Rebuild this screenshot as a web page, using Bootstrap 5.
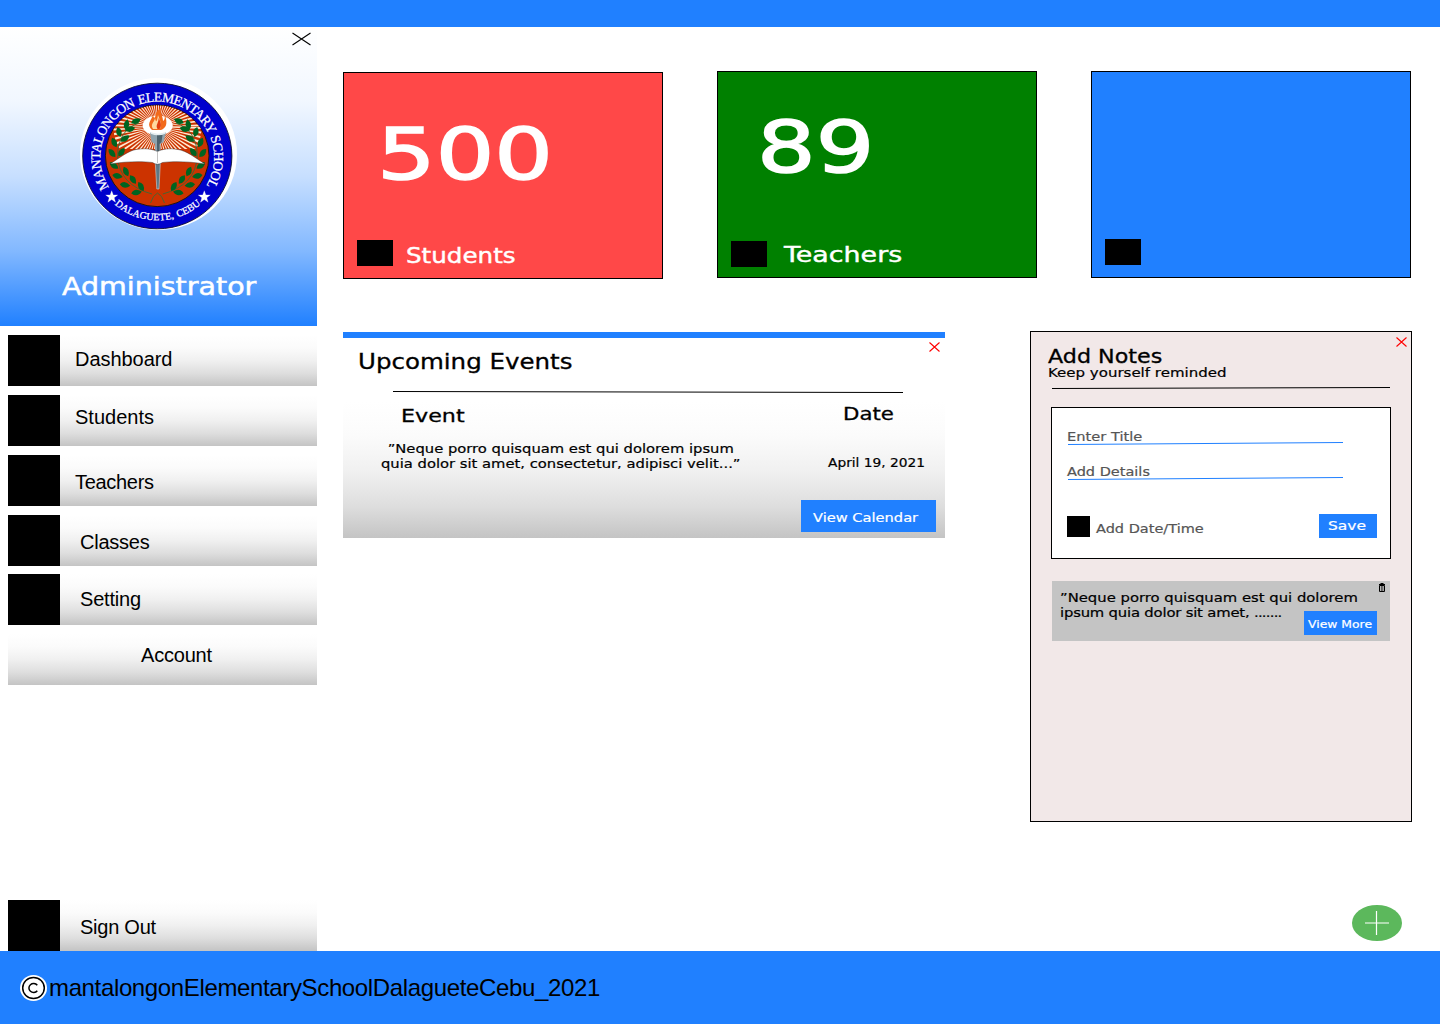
<!DOCTYPE html>
<html lang="en">
<head>
<meta charset="utf-8">
<meta name="viewport" content="width=device-width, initial-scale=1">
<title>Administrator Dashboard</title>
<link href="https://cdn.jsdelivr.net/npm/bootstrap@5.3.0/dist/css/bootstrap.min.css" rel="stylesheet">
<style>
  :root { --brand: #2080ff; }
  body { font-family: "Liberation Sans", Arial, sans-serif; color: #000; background: #fff; }
  .page { width: 1440px; height: 1024px; }
  .brand-bg { background: var(--brand); }
  .topbar { height: 27px; }
  .bottombar { height: 73px; padding: 0 0 0 20px; font-size: 24px; letter-spacing: -.36px; }
  svg { display: block; overflow: visible; flex: none; }

  /* wide display lettering */
  .wide { display: block; font-family: "DejaVu Sans", Verdana, sans-serif; line-height: 1; white-space: nowrap;
          transform: scaleX(var(--sx, 1.18)); transform-origin: 0 50%; -webkit-text-stroke: .3px currentColor; }
  .t-sm { font-size: 12.5px; -webkit-text-stroke-width: .2px; }

  /* sidebar */
  .sidebar { width: 317px; }
  .profile { height: 299px; padding-top: 6px;
    background: linear-gradient(#fff 0, #f1f7ff 25%, #c7dfff 50%, #82b8ff 75%, var(--brand) 100%); }
  .profile .close-x { margin-right: 6px; }
  .seal { margin: 31px 0 0 78px; }
  .role { margin: 43px 0 0 62px; font-size: 25px; --sx: 1.14; -webkit-text-stroke-width: .5px; }
  .menu { margin-left: 8px; padding-top: 9px; gap: 9px; }
  .fade-grey { background: linear-gradient(#fff 0, #fbfbfb 25%, #f0f0f0 50%, #dedede 75%, #c4c4c4 100%); }
  .entry { height: 51px; font-size: 20px; line-height: 1; color: #000; text-decoration: none; }
  .entry .blk { width: 52px; height: 51px; }
  .entry-out { margin-left: 8px; }
  .blk { background: #000; flex: none; }

  /* content */
  .main-area { padding: 44px 28px 0 26px; }
  .stats { gap: 54px; }
  .stat { width: 320px; height: 207px; border: 1px solid #000; padding: 0 0 12px 13px; }
  .stat-red { background: #ff4848; margin-top: 1px; padding-bottom: 12px; }
  .stat-green { background: #008000; padding-bottom: 10px; }
  .stat .blk { width: 36px; height: 26px; }
  .figure-num { font-size: 72px; --sx: 1.28; -webkit-text-stroke-width: 1.6px; }
  .stat-red .figure-num { margin: 45px 0 0 20px; }
  .stat-green .figure-num { margin: 39px 0 0 26px; }
  .stat-name { font-size: 20.5px; -webkit-text-stroke-width: .4px; }
  .panels { margin-top: 52px; }
  .events { width: 602px; height: 206px; border-top: 6px solid var(--brand); margin-top: 1px; padding: 4px 9px 6px 15px;
    background: linear-gradient(#fff 32%, #fbfbfb 49%, #f0f0f0 67%, #dedede 84%, #c4c4c4 100%); }
  .events h2 { font-size: 20.5px; margin: 10px 0 0 0; --sx: 1.195; }
  .events .head-row { font-size: 18.5px; margin: 14px 42px 0 43px; }
  .events .quote { line-height: 15px; text-align: center; margin: 0 0 0 23px; transform-origin: 0 0; }
  .btn-flat { background: var(--brand); color: #fff; border: 0; border-radius: 0; padding: 0; text-align: left;
    display: flex; align-items: flex-start; }
  .btn-flat:hover { background: #0d6efd; color: #fff; }
  .btn-cal { width: 135px; height: 32px; padding: 12px 0 0 12px; --sx: 1.17; }
  .notes { width: 382px; height: 491px; background: #f2e8e8; border: 1px solid #000; padding: 5px 20px 0 20px; }
  .notes h2 { font-size: 19px; margin: 10px 0 0 -3px; --sx: 1.17; }
  .note-form { height: 152px; background: #fff; border: 1px solid #000; padding: 23px 13px 0 15px; margin: 18px 0 0 0; color: #555; }
  .note-form .blk { width: 23px; height: 21px; margin-top: 2px; }
  .btn-save { width: 58px; height: 24px; padding: 6px 0 0 9px; --sx: 1.24; }
  .saved { height: 60px; background: #c4c4c4; margin: 22px 1px 0 1px; padding: 9px 0 0 8px; }
  .saved .txt { line-height: 15px; }
  .btn-more { width: 73px; height: 24px; right: 13px; bottom: 6px; font-size: 10.5px; }
  .btn-more .wide { margin: 8px 0 0 4px; --sx: 1.18; -webkit-text-stroke-width: .2px; }
  .bin { top: 2px; right: 5px; }
  .fab { right: 38px; bottom: 83px; }
</style>
</head>
<body>
<div class="page d-flex flex-column position-relative overflow-hidden">
  <header class="topbar brand-bg flex-shrink-0"></header>

  <div class="d-flex flex-grow-1">
    <aside class="sidebar d-flex flex-column flex-shrink-0">
      <div class="profile">
        <div class="d-flex justify-content-end">
          <svg class="close-x" width="19" height="13" stroke="#000" stroke-width="1.1"><path d="M.5 0 18.500 12M18.500 0 .5 12"/></svg>
        </div>
        <svg class="seal" width="160" height="154" viewBox="78 77 160 154">
          <defs>
            <path id="arcTop" d="M109.700 188.300A56.800 56 0 1 1 204.700 188.300"/>
            <path id="arcBot" d="M114.500 204.500A65 63.500 0 0 0 200.500 204.500"/>
            <clipPath id="disc"><ellipse cx="157.200" cy="155.800" rx="51.500" ry="50.500"/></clipPath>
            <clipPath id="upper"><path d="M100 100h115v49H100z"/></clipPath>
            <path id="leaf" d="M-5.300 0Q-1-5.600 5.300 0Q0 5.600-5.300 0z"/>
            <g id="laurel">
              <path d="M139 123Q118 130 117.500 156Q119 185 152 194" fill="none" stroke="#3a6a35" stroke-width=".9"/>
              <g fill="#006420">
                <use href="#leaf" transform="translate(126.500 124.500)rotate(-80)"/><use href="#leaf" transform="translate(136 121)rotate(-25)"/>
                <use href="#leaf" transform="translate(119 132)rotate(75)"/><use href="#leaf" transform="translate(130 129)rotate(-15)"/>
                <use href="#leaf" transform="translate(114.300 142.500)rotate(65)"/><use href="#leaf" transform="translate(125 138.500)rotate(-35)"/>
                <use href="#leaf" transform="translate(112 153)rotate(50)"/><use href="#leaf" transform="translate(121.500 152)rotate(-55)"/>
                <use href="#leaf" transform="translate(114 165.500)rotate(35)"/><use href="#leaf" transform="translate(126 171.500)rotate(65)"/>
                <use href="#leaf" transform="translate(117.500 176)rotate(12)"/><use href="#leaf" transform="translate(133 179.500)rotate(55)"/>
                <use href="#leaf" transform="translate(125 185)rotate(8)"/><use href="#leaf" transform="translate(141 186.500)rotate(60)"/>
                <use href="#leaf" transform="translate(136.500 192.500)rotate(-10)"/>
              </g>
            </g>
            <path id="star" d="M0-6.300 1.600-2.100 6-2 2.500.8 3.800 5.200 0 2.600-3.800 5.200-2.500.8-6-2-1.600-2.100z"/>
          </defs>
          <ellipse cx="158.500" cy="154" rx="78.500" ry="76" fill="#fff"/>
          <ellipse cx="157.300" cy="156" rx="74.600" ry="72.800" fill="#0000cd" stroke="#101030" stroke-width=".9"/>
          <ellipse cx="157.200" cy="155.800" rx="51.800" ry="50.800" fill="#cc3300" stroke="#111" stroke-width=".9"/>
          <g clip-path="url(#disc)"><g clip-path="url(#upper)">
            <circle cx="157.500" cy="127" r="22" fill="none" stroke="#ffe9d0" stroke-width="44" stroke-dasharray="1.05 1.253"/>
          </g></g>
          <use href="#laurel"/>
          <use href="#laurel" transform="translate(314.800 0)scale(-1 1)"/>
          <path d="M150.500 203Q153 195 157.500 193Q162 195 164.500 203" fill="none" stroke="#3a6a35" stroke-width=".9"/>
          <ellipse cx="157.700" cy="125.500" rx="15" ry="10" fill="#fff"/>
          <path d="M152 130C146 124 151 121 153 115C154 119 155 119 156 113C158 110 160 109 161 108C159 113 163 115 163 121C166 119 164 116 165 115C168 124 166 128 161 130z" fill="#f26a1b"/>
          <path d="M153 129C150 124 154 123 155 118C156 123 157 122 158 115C160 121 162 123 160 129z" fill="#ffd9a0"/>
          <path d="M157.500 129C155 125 159 123 158.500 118C162 124 161 127 159.500 129z" fill="#e23c10"/>
          <path d="M150 132.500Q158 136 166 132.500L163.500 142 160.500 144V153H155V144L151.500 142z" fill="#8fa3ad"/>
          <path d="M157 135h5.500l-1 7-2 2v9h-2.500z" fill="#4d626d"/>
          <path d="M151 133Q158 136 165 133" fill="none" stroke="#e5edf0" stroke-width="1.400"/>
          <path d="M155.300 163h5l-1.300 26h-2.200z" fill="#5e7884" stroke="#c9d5da" stroke-width=".6"/>
          <path d="M110 164C121 157 128 151 136 149.500C146 148 152 149 157.500 151.500C163 149 169 148 178 149.500C187 151 194 157 205 164C190 161.500 174 161 162.500 162.500Q157.500 166 152.500 162.500C141 161 125 161.500 110 164z" fill="#fff" stroke="#222" stroke-width=".4"/>
          <path d="M157.500 151v12" stroke="#999" stroke-width=".6"/>
          <g fill="#fff" stroke="#fff" stroke-width=".25" font-family="'Liberation Serif', serif">
            <text font-size="13.600" word-spacing="1.5"><textPath href="#arcTop" startOffset="1" textLength="238" lengthAdjust="spacing">MANTALONGON ELEMENTARY SCHOOL</textPath></text>
            <text font-size="10" word-spacing="1"><textPath href="#arcBot" textLength="94" lengthAdjust="spacing">DALAGUETE, CEBU</textPath></text>
            <use href="#star" x="111.700" y="197"/><use href="#star" x="204.300" y="197"/>
          </g>
        </svg>
        <div class="wide role text-white">Administrator</div>
      </div>

      <nav class="menu d-flex flex-column">
        <a href="#" class="entry fade-grey d-flex"><span class="blk"></span><span style="margin:14px 0 0 15px;letter-spacing:-.05px">Dashboard</span></a>
        <a href="#" class="entry fade-grey d-flex"><span class="blk"></span><span style="margin:12px 0 0 15px">Students</span></a>
        <a href="#" class="entry fade-grey d-flex"><span class="blk"></span><span style="margin:17px 0 0 15px;letter-spacing:-.3px">Teachers</span></a>
        <a href="#" class="entry fade-grey d-flex"><span class="blk"></span><span style="margin:17px 0 0 20px;letter-spacing:-.25px">Classes</span></a>
        <a href="#" class="entry fade-grey d-flex" style="margin-top:-1px"><span class="blk"></span><span style="margin:15px 0 0 20px;letter-spacing:-.2px">Setting</span></a>
        <a href="#" class="entry fade-grey d-flex"><span style="margin:11px 0 0 133px;letter-spacing:-.2px">Account</span></a>
      </nav>
      <a href="#" class="entry entry-out fade-grey d-flex mt-auto"><span class="blk"></span><span style="margin:17px 0 0 20px;letter-spacing:-.25px">Sign Out</span></a>
    </aside>

    <main class="main-area flex-grow-1">
      <div class="stats d-flex">
        <section class="stat stat-red d-flex flex-column justify-content-between text-white">
          <div class="wide figure-num">500</div>
          <div class="d-flex align-items-start"><span class="blk"></span><span class="wide stat-name" style="margin:6px 0 0 13px;--sx:1.2">Students</span></div>
        </section>
        <section class="stat stat-green d-flex flex-column justify-content-between text-white">
          <div class="wide figure-num">89</div>
          <div class="d-flex align-items-center"><span class="blk"></span><span class="wide stat-name" style="margin:3px 0 0 17px;--sx:1.31">Teachers</span></div>
        </section>
        <section class="stat brand-bg d-flex align-items-end"><span class="blk"></span></section>
      </div>

      <div class="panels d-flex justify-content-between">
        <section class="events d-flex flex-column">
          <div class="d-flex justify-content-between align-items-start">
            <h2 class="wide">Upcoming Events</h2>
            <svg width="11" height="10" style="margin-right:-4px" stroke="#f00" stroke-width="1.1"><path d="M.5.5 10.500 9.500M10.500.5.5 9.500"/></svg>
          </div>
          <svg width="510" height="2" style="margin:18px 0 0 35px" stroke="#000"><path d="M0 .5 510 1.500"/></svg>
          <div class="head-row d-flex justify-content-between">
            <span class="wide" style="--sx:1.2">Event</span>
            <span class="wide" style="--sx:1.15;margin:-2px 7px 0 0">Date</span>
          </div>
          <div class="d-flex justify-content-between align-items-start" style="margin-top:16px">
            <p class="wide quote t-sm">”Neque porro quisquam est qui dolorem ipsum<br>quia dolor sit amet, consectetur, adipisci velit...”</p>
            <span class="wide t-sm" style="--sx:1.1;margin:16px 20px 0 0">April 19, 2021</span>
          </div>
          <button class="btn btn-flat btn-cal align-self-end mt-auto"><span class="wide t-sm" style="--sx:1.17">View Calendar</span></button>
        </section>

        <section class="notes">
          <div class="d-flex justify-content-between align-items-start">
            <h2 class="wide">Add Notes</h2>
            <svg width="11" height="10" style="margin-right:-16px" stroke="#f00" stroke-width="1.1"><path d="M.5.5 10.500 9.500M10.500.5.5 9.500"/></svg>
          </div>
          <div class="wide t-sm" style="margin:1px 0 0 -3px;--sx:1.2">Keep yourself reminded</div>
          <svg width="338" height="2" style="margin:7px 0 0 1px" stroke="#000"><path d="M0 1.500 338 .5"/></svg>
          <form class="note-form">
            <label class="wide t-sm" style="--sx:1.17">Enter Title</label>
            <svg width="275" height="3" style="margin:-1px 0 0 1px" stroke="#2080ff"><path d="M0 2.500 275 .5"/></svg>
            <label class="wide t-sm" style="margin-top:21px;--sx:1.16">Add Details</label>
            <svg width="275" height="3" style="margin:-2px 0 0 1px" stroke="#2080ff"><path d="M0 2.500 275 .5"/></svg>
            <div class="d-flex align-items-start" style="margin-top:34px">
              <span class="blk"></span>
              <span class="wide t-sm" style="margin:9px 0 0 6px;--sx:1.16">Add Date/Time</span>
              <button type="button" class="btn btn-flat btn-save ms-auto"><span class="wide t-sm">Save</span></button>
            </div>
          </form>
          <div class="saved position-relative">
            <div class="wide txt t-sm" style="--sx:1.185">”Neque porro quisquam est qui dolorem<br><span style="letter-spacing:-.16px">ipsum quia dolor sit amet, <span style="letter-spacing:-.65px">.......</span></span></div>
            <svg class="bin position-absolute" width="6" height="9" viewBox="0 0 6 9"><path d="M0 1h1.500V0h3v1H6v1H0z"/><path d="M.5 2.500h5v6h-5z" fill="none" stroke="#000"/><path d="M2.400 3v5M3.800 3v5" stroke="#000" stroke-width=".6"/></svg>
            <button class="btn btn-flat btn-more position-absolute"><span class="wide">View More</span></button>
          </div>
        </section>
      </div>
    </main>
  </div>

  <footer class="bottombar brand-bg d-flex align-items-center flex-shrink-0">
    <svg width="27" height="26" viewBox="0 0 27 26" style="margin-right:2px"><ellipse cx="13.500" cy="13" rx="13.500" ry="13" fill="#fff"/><ellipse cx="13.500" cy="13" rx="10.800" ry="10.500" fill="none" stroke="#000" stroke-width="1.500"/><path d="M17.300 10.200A4.700 4.500 0 1 0 17.300 15.800" fill="none" stroke="#000" stroke-width="1.500"/></svg>
    <span>mantalongonElementarySchoolDalagueteCebu_2021</span>
  </footer>

  <svg class="fab position-absolute" width="50" height="36"><ellipse cx="25" cy="18" rx="25" ry="18" fill="#5cb85c"/><path d="M13 18h24M24.500 6v24" stroke="#fff" stroke-width="1.200"/></svg>
</div>
<script src="https://cdn.jsdelivr.net/npm/bootstrap@5.3.0/dist/js/bootstrap.bundle.min.js"></script>
</body>
</html>
